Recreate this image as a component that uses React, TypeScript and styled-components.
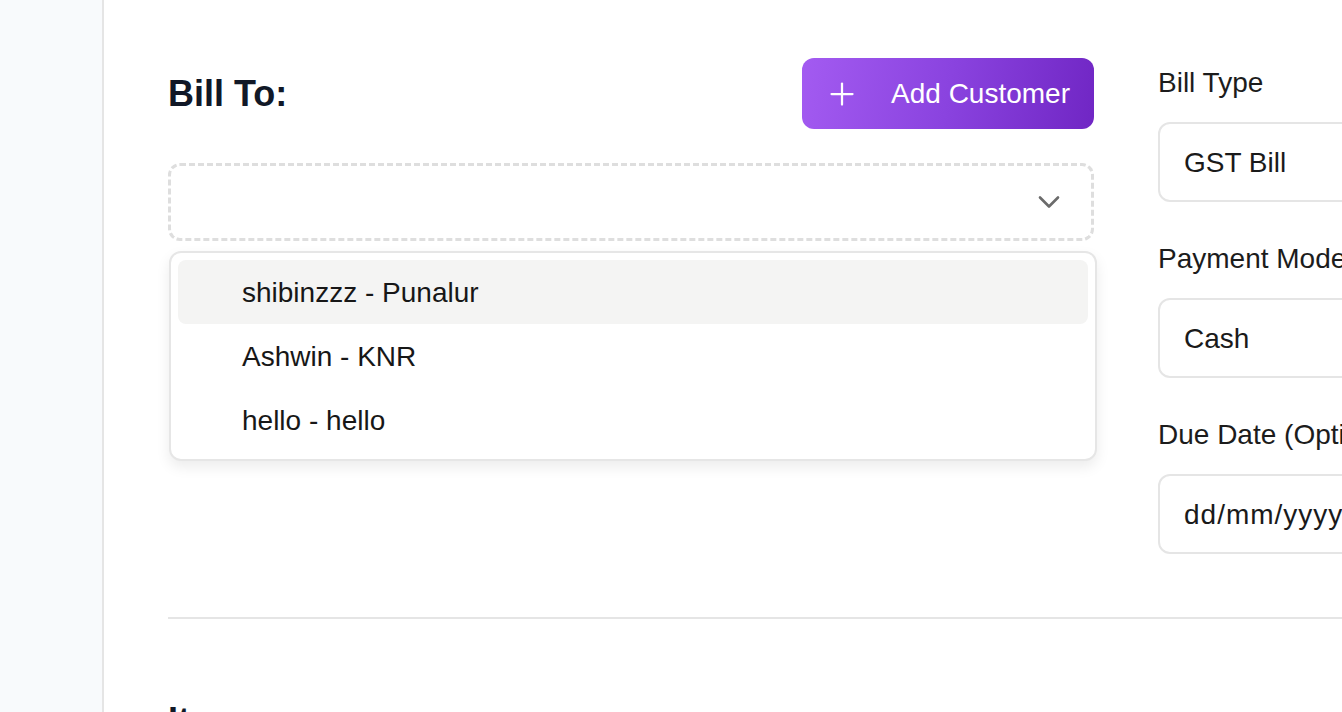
import styled, { createGlobalStyle } from "styled-components";
import { ChevronDown, Plus } from "lucide-react";

const GlobalStyle = createGlobalStyle`
  html, body {
    margin: 0;
    padding: 0;
    background: #ffffff;
    overflow: hidden;
  }
  body {
    font-family: "Liberation Sans", Arial, Helvetica, sans-serif;
    color: #1a1a1a;
  }
`;

const Page = styled.div`
  display: flex;
  width: 1342px;
  height: 712px;
  overflow: hidden;
`;

const Sidebar = styled.aside`
  flex: 0 0 102px;
  background: #f8fafc;
  border-right: 2px solid #e5e5e5;
`;

const Main = styled.main`
  flex: 1;
  min-width: 0;
  padding: 59px 0 0 64px;
`;

const TopGrid = styled.section`
  display: grid;
  grid-template-columns: 926px 420px;
  column-gap: 64px;
  align-items: start;
`;

const LeftColumn = styled.div`
  display: flex;
  flex-direction: column;
  gap: 34px;
`;

const HeaderRow = styled.div`
  display: flex;
  align-items: center;
  justify-content: space-between;
  margin-top: -1px;
`;

const SectionTitle = styled.h2`
  margin: 0;
  font-size: 36px;
  font-weight: 700;
  color: #111827;
`;

const AddButton = styled.button`
  display: flex;
  align-items: center;
  gap: 31px;
  height: 71px;
  padding: 0 24px 0 22px;
  border: 0;
  border-radius: 12px;
  background: linear-gradient(100deg, #a35bf1 0%, #8a43df 50%, #7026c4 100%);
  color: #ffffff;
  font-family: inherit;
  font-size: 28px;
  cursor: pointer;
`;

const SelectWrap = styled.div`
  position: relative;
`;

const CustomerSelect = styled.div`
  display: flex;
  align-items: center;
  justify-content: flex-end;
  height: 78px;
  box-sizing: border-box;
  padding-right: 24px;
  border: 3px dashed #dedede;
  border-radius: 12px;
  color: #6b6b6b;
`;

const Menu = styled.ul`
  position: absolute;
  top: calc(100% + 10px);
  left: 1px;
  right: -3px;
  margin: 0;
  padding: 7px;
  list-style: none;
  background: #ffffff;
  border: 2px solid #e6e6e6;
  border-radius: 12px;
  box-shadow: 0 6px 14px rgba(0, 0, 0, 0.08);
  z-index: 10;
`;

const MenuItem = styled.li<{ $active?: boolean }>`
  display: flex;
  align-items: center;
  height: 64px;
  padding: 2px 0 0 64px;
  box-sizing: border-box;
  border-radius: 8px;
  background: ${(p) => (p.$active ? "#f4f4f3" : "transparent")};
  font-size: 28px;
  color: #171717;
`;

const RightColumn = styled.div`
  display: flex;
  flex-direction: column;
  gap: 39px;
  padding-top: 6px;
`;

const Field = styled.div`
  display: flex;
  flex-direction: column;
  gap: 21px;
`;

const Label = styled.label`
  font-size: 28px;
  line-height: 36px;
  color: #1c1c1c;
  white-space: nowrap;
`;

const InputBox = styled.div<{ $placeholder?: boolean }>`
  display: flex;
  align-items: center;
  height: 80px;
  box-sizing: border-box;
  padding: 2px 0 0 24px;
  border: 2px solid #e5e5e5;
  border-radius: 12px;
  font-size: 28px;
  letter-spacing: ${(p) => (p.$placeholder ? "1px" : "0")};
  color: #1a1a1a;
  white-space: nowrap;
`;

const Divider = styled.hr`
  margin: 63px 0 0;
  border: 0;
  border-top: 2px solid #e5e5e5;
`;

const ItemsTitle = styled(SectionTitle)`
  margin-top: 81px;
`;

const customers = [
  { name: "shibinzzz", place: "Punalur" },
  { name: "Ashwin", place: "KNR" },
  { name: "hello", place: "hello" },
];

const fields = [
  { label: "Bill Type", value: "GST Bill" },
  { label: "Payment Mode", value: "Cash" },
  { label: "Due Date (Optional)", value: "dd/mm/yyyy", placeholder: true },
];

export default function App() {
  return (
    <>
      <GlobalStyle />
      <Page>
        <Sidebar />
        <Main>
          <TopGrid>
            <LeftColumn>
              <HeaderRow>
                <SectionTitle>Bill To:</SectionTitle>
                <AddButton>
                  <Plus size={36} strokeWidth={1.5} />
                  Add Customer
                </AddButton>
              </HeaderRow>
              <SelectWrap>
                <CustomerSelect>
                  <ChevronDown size={36} strokeWidth={1.75} />
                </CustomerSelect>
                <Menu>
                  {customers.map((c, i) => (
                    <MenuItem key={c.name} $active={i === 0}>
                      {c.name} - {c.place}
                    </MenuItem>
                  ))}
                </Menu>
              </SelectWrap>
            </LeftColumn>
            <RightColumn>
              {fields.map((f) => (
                <Field key={f.label}>
                  <Label>{f.label}</Label>
                  <InputBox $placeholder={f.placeholder}>{f.value}</InputBox>
                </Field>
              ))}
            </RightColumn>
          </TopGrid>
          <Divider />
          <ItemsTitle>Items</ItemsTitle>
        </Main>
      </Page>
    </>
  );
}
